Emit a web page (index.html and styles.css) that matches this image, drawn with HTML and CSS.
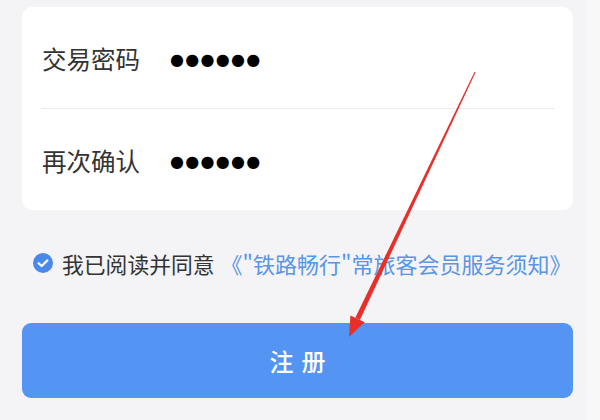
FILE: index.html
```html
<!DOCTYPE html>
<html lang="zh-CN">
<head>
<meta charset="utf-8">
<link rel="stylesheet" href="styles.css">
</head>
<body>
<div class="page">
  <main class="main">
    <section class="card">
      <div class="row">
        <span class="label">交易密码</span>
        <span class="dots">●●●●●●</span>
      </div>
      <div class="divider"></div>
      <div class="row">
        <span class="label">再次确认</span>
        <span class="dots">●●●●●●</span>
      </div>
    </section>
    <div class="agree">
      <span class="check">
        <svg width="20" height="20" viewBox="0 0 20 20"><circle cx="10" cy="10" r="10" fill="#4a89ea"/><path d="M5.6 10.2 L8.7 13 L14.4 7.4" fill="none" stroke="#fff" stroke-width="2.2" stroke-linecap="round" stroke-linejoin="round"/></svg>
      </span>
      <span class="agree-text">我已阅读并同意</span>
      <span class="agree-link">《"铁路畅行"常旅客会员服务须知》</span>
    </div>
    <button class="submit">注册</button>
  </main>
  <aside class="strip"></aside>
  <svg class="arrow" width="600" height="420" viewBox="0 0 600 420">
    <polygon points="475.6,72.2 474.6,71.8 355.3,317.8 359.9,320.0" fill="#e8302b"/>
    <polygon points="349,337 350.4,315.5 364.8,322.3" fill="#e8302b"/>
  </svg>
</div>
</body>
</html>
```
FILE: styles.css
```css
html, body {
  margin: 0;
  padding: 0;
}
body {
  width: 600px;
  height: 420px;
  overflow: hidden;
  background: #f4f4f6;
  font-family: "Noto Sans CJK SC", "Noto Sans", sans-serif;
}
.page {
  position: relative;
  display: flex;
  width: 600px;
  height: 420px;
}
.main {
  box-sizing: border-box;
  width: 587px;
  padding: 7px 14px 0 22px;
  display: flex;
  flex-direction: column;
}
.strip {
  flex: 1;
  background: #f8f8f9;
}
.card {
  background: #fff;
  border-radius: 10px;
  height: 203px;
  padding: 0 18px 0 19px;
  display: flex;
  flex-direction: column;
}
.row {
  flex: 1;
  display: flex;
  align-items: center;
  padding-left: 1px;
  padding-top: 4px;
}
.label {
  font-size: 24.5px;
  color: #333;
  width: 128px;
  line-height: 1;
}
.dots {
  font-family: "DejaVu Sans", sans-serif;
  font-size: 16px;
  letter-spacing: 1.3px;
  color: #000;
  line-height: 1;
}
.divider {
  height: 1px;
  background: #ececec;
}
.agree {
  height: 100px;
  display: flex;
  align-items: center;
  padding: 0 0 0 11px;
  margin-top: 3px;
}
.check {
  width: 20px;
  height: 20px;
  display: flex;
  margin-right: 9px;
}
.agree-text {
  font-size: 21.8px;
  color: #333;
}
.agree-link {
  font-size: 22px;
  color: #5a95e6;
  margin-left: 6px;
}
.submit {
  margin-top: 10px;
  height: 75px;
  border: none;
  border-radius: 9px;
  background: #5494f2;
  color: #fff;
  font-family: "Noto Sans CJK SC", sans-serif;
  font-size: 24px;
  font-weight: 500;
  letter-spacing: 8px;
  text-indent: 8px;
  padding: 0;
}
.arrow {
  position: absolute;
  left: 0;
  top: 0;
  pointer-events: none;
}
```
